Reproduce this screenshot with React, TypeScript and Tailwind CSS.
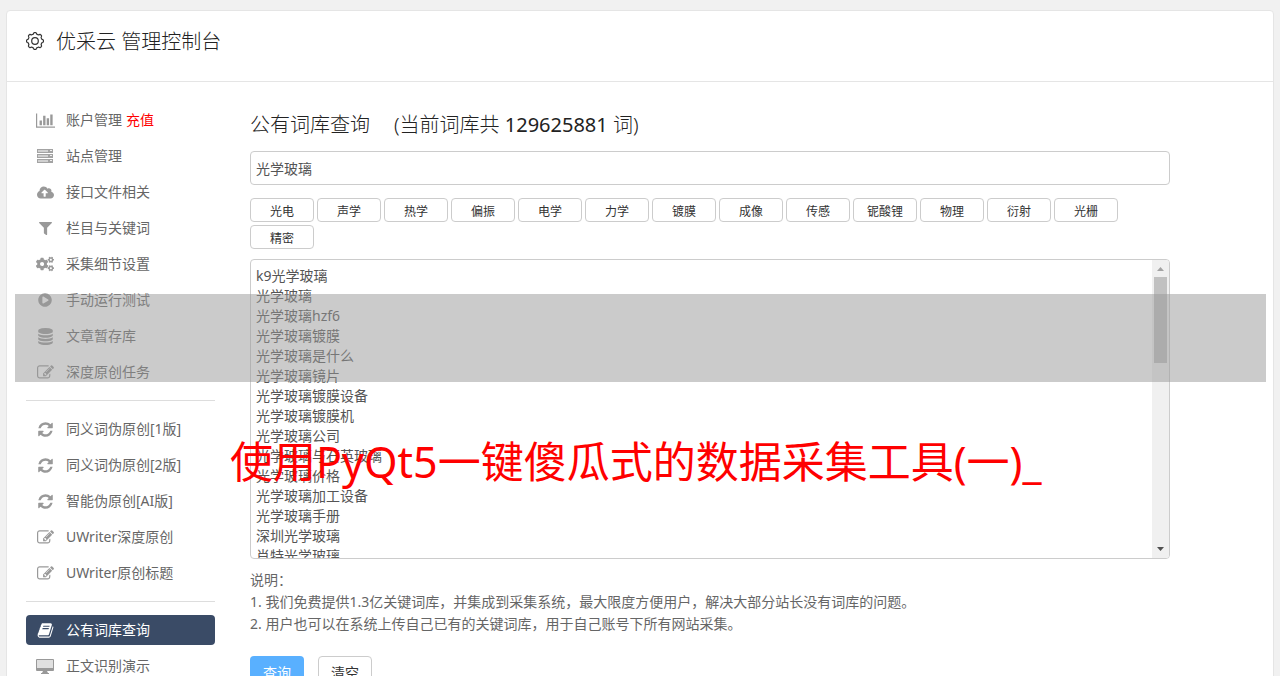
import { useState } from 'react'
import type { ReactNode } from 'react'
import clsx from 'clsx'
import { FaCloudUploadAlt, FaCogs, FaFilter, FaPlayCircle } from 'react-icons/fa'

type MenuItem = {
  label: string
  icon: ReactNode
  extra?: string
  active?: boolean
}

const Glyph = ({ d, viewBox = '0 0 1792 1792', size = 17 }: { d: string; viewBox?: string; size?: number }) => (
  <svg viewBox={viewBox} width={size} height={size} fill="currentColor" aria-hidden="true">
    <path d={d} />
  </svg>
)

const REFRESH =
  'M1639 1056q0 5-1 7-64 268-268 434.5t-478 166.5q-146 0-282.5-55t-243.5-157l-129 129q-19 19-45 19t-45-19-19-45v-448q0-26 19-45t45-19h448q26 0 45 19t19 45-19 45l-137 137q71 66 161 102t187 36q134 0 250-65t186-179q11-17 53-117 8-23 30-23h192q13 0 22.5 9.5t9.5 22.5zm25-800v448q0 26-19 45t-45 19h-448q-26 0-45-19t-19-45 19-45l138-138q-148-137-349-137-134 0-250 65t-186 179q-11 17-53 117-8 23-30 23h-199q-13 0-22.5-9.5t-9.5-22.5v-7q65-268 270-434.5t480-166.5q146 0 284 55.5t245 156.5l130-129q19-19 45-19t45 19 19 45z'
const EDIT =
  'M888 1184l116-116-152-152-116 116v56h96v96h56zm440-720q-16-16-33 1l-350 350q-17 17-1 33t33-1l350-350q17-17 1-33zm80 594v190q0 119-84.5 203.5t-203.5 84.5h-832q-119 0-203.5-84.5t-84.5-203.5v-832q0-119 84.5-203.5t203.5-84.5h832q63 0 117 25 15 7 18 23 3 17-9 29l-49 49q-14 14-32 8-23-6-45-6h-832q-66 0-113 47t-47 113v832q0 66 47 113t113 47h832q66 0 113-47t47-113v-126q0-13 9-22l64-64q15-15 35-7t20 29zm-96-738l288 288-672 672h-288v-288zm444 132l-92 92-288-288 92-92q28-28 68-28t68 28l152 152q28 28 28 68t-28 68z'
const DATABASE =
  'M896 768q237 0 443-43t325-127v170q0 69-103 128t-280 93.5-385 34.5-385-34.5-280-93.5-103-128v-170q119 84 325 127t443 43zm0 768q237 0 443-43t325-127v170q0 69-103 128t-280 93.5-385 34.5-385-34.5-280-93.5-103-128v-170q119 84 325 127t443 43zm0-384q237 0 443-43t325-127v170q0 69-103 128t-280 93.5-385 34.5-385-34.5-280-93.5-103-128v-170q119 84 325 127t443 43zm0-1152q208 0 385 34.5t280 93.5 103 128v128q0 69-103 128t-280 93.5-385 34.5-385-34.5-280-93.5-103-128v-128q0-69 103-128t280-93.5 385-34.5z'
const BOOK =
  'M1703 478q40 57 18 129l-275 906q-19 64-76.5 107.5t-122.5 43.5h-923q-77 0-148.5-53.5t-99.5-131.5q-24-67-2-127 0-4 3-27t4-37q1-8-3-21.5t-3-19.5q2-11 8-21t16.5-23.5 16.5-23.5q23-38 45-91.5t30-91.5q3-10 .5-30t-.5-28q3-11 17-28t17-23q21-36 42-92t25-90q1-9-2.5-32t.5-28q4-13 22-30.5t22-22.5q19-26 42.5-84.5t27.5-96.5q1-8-3-25.5t-2-26.5q2-8 9-18t18-23 17-21q8-12 16.5-30.5t15-35 16-36 19.5-32 26.5-23.5 36-11.5 47.5 5.5l-1 3q38-9 51-9h761q74 0 114 56t18 130l-274 906q-36 119-71.5 153.5t-128.5 34.5h-869q-27 0-38 15-11 16-1 43 24 70 144 70h923q29 0 56-15.5t35-41.5l300-987q7-22 5-57 38 15 59 43zm-1064 2q-4 13 2 22.5t20 9.5h608q13 0 25.5-9.5t16.5-22.5l21-64q4-13-2-22.5t-20-9.5h-608q-13 0-25.5 9.5t-16.5 22.5zm-83 256q-4 13 2 22.5t20 9.5h608q13 0 25.5-9.5t16.5-22.5l21-64q4-13-2-22.5t-20-9.5h-608q-13 0-25.5 9.5t-16.5 22.5z'
const CHART =
  'M640 896v512h-256v-512h256zM1024 384v1024h-256v-1024h256zM2048 1536v128h-2048v-1536h128v1408h1920zM1408 640v768h-256v-768h256zM1792 256v1152h-256v-1152h256z'

const ServerIcon = () => (
  <svg viewBox="0 0 16 14" width="16" height="14" aria-hidden="true">
    {[0, 5, 10].map((y) => (
      <g key={y}>
        <rect x="0" y={y} width="16" height="4" fill="#a3a3a3" />
        <rect x="1" y={y + 1} width="10" height="2" fill="#d0d0d0" />
        <rect x="13" y={y + 1} width="2" height="1" fill="#eee" />
      </g>
    ))}
  </svg>
)

const DesktopIcon = () => (
  <svg viewBox="0 0 18 15" width="18" height="15" aria-hidden="true">
    <rect x="0" y="0" width="18" height="12" rx="1" fill="#999" />
    <rect x="1" y="1" width="16" height="8" fill="#e0e0e0" />
    <path d="M7 12h4l1 2h1v1H5v-1h1z" fill="#999" />
  </svg>
)

// cog outline with eight rounded teeth
const GearIcon = () => {
  const points: string[] = []
  for (let i = 0; i <= 96; i++) {
    const a = (i / 96) * Math.PI * 2
    const r = 7.7 + 0.75 * Math.tanh(2.5 * Math.cos(8 * a))
    points.push(`${(9 + r * Math.cos(a)).toFixed(2)} ${(9 + r * Math.sin(a)).toFixed(2)}`)
  }
  return (
    <svg viewBox="0 0 18 18" width="18" height="18" fill="none" stroke="#333" strokeWidth="1.2" aria-hidden="true">
      <path d={`M${points.join('L')}Z`} strokeLinejoin="round" />
      <circle cx="9" cy="9" r="3.3" />
    </svg>
  )
}

const MENU: MenuItem[][] = [
  [
    { label: '账户管理', extra: '充值', icon: <Glyph d={CHART} viewBox="0 0 2048 1792" size={19} /> },
    { label: '站点管理', icon: <ServerIcon /> },
    { label: '接口文件相关', icon: <FaCloudUploadAlt size={17} /> },
    { label: '栏目与关键词', icon: <FaFilter size={13} /> },
    { label: '采集细节设置', icon: <FaCogs size={18} /> },
    { label: '手动运行测试', icon: <FaPlayCircle size={14} /> },
    { label: '文章暂存库', icon: <Glyph d={DATABASE} /> },
    { label: '深度原创任务', icon: <Glyph d={EDIT} /> },
  ],
  [
    { label: '同义词伪原创[1版]', icon: <Glyph d={REFRESH} /> },
    { label: '同义词伪原创[2版]', icon: <Glyph d={REFRESH} /> },
    { label: '智能伪原创[AI版]', icon: <Glyph d={REFRESH} /> },
    { label: 'UWriter深度原创', icon: <Glyph d={EDIT} /> },
    { label: 'UWriter原创标题', icon: <Glyph d={EDIT} /> },
  ],
  [
    { label: '公有词库查询', icon: <Glyph d={BOOK} />, active: true },
    { label: '正文识别演示', icon: <DesktopIcon /> },
  ],
]

const TAGS = ['光电', '声学', '热学', '偏振', '电学', '力学', '镀膜', '成像', '传感', '铌酸锂', '物理', '衍射', '光栅', '精密']

const WORDS = [
  'k9光学玻璃', '光学玻璃', '光学玻璃hzf6', '光学玻璃镀膜', '光学玻璃是什么', '光学玻璃镜片',
  '光学玻璃镀膜设备', '光学玻璃镀膜机', '光学玻璃公司', '光学玻璃与石英玻璃', '光学玻璃价格',
  '光学玻璃加工设备', '光学玻璃手册', '深圳光学玻璃', '肖特光学玻璃',
]

function Sidebar() {
  return (
    <nav className="w-[189px] shrink-0">
      {MENU.map((group, i) => (
        <div key={i}>
          {i > 0 && <hr className="my-[13px] border-[#ddd]" />}
          <ul className="space-y-1.5">
            {group.map((item) => (
              <li key={item.label}>
                <a
                  href="#"
                  className={clsx(
                    'flex h-[30px] items-center rounded text-sm',
                    item.active ? 'bg-[#3a4b66] text-white' : 'text-[#666]',
                  )}
                >
                  <span className={clsx('flex w-10 justify-center pr-0.5', item.active ? 'text-white' : 'text-[#999]')}>
                    {item.icon}
                  </span>
                  {item.label}
                  {item.extra && <span className="ml-1 text-[#f00]">{item.extra}</span>}
                </a>
              </li>
            ))}
          </ul>
        </div>
      ))}
    </nav>
  )
}

function WordQuery() {
  const [keyword, setKeyword] = useState('光学玻璃')
  const [words, setWords] = useState(WORDS.join('\n'))

  return (
    <main className="ml-[35px] max-w-[920px] min-w-0 flex-1">
      <h2 className="mt-1.5 flex text-xl leading-7 font-light text-[#222]">
        <span>公有词库查询</span>
        <span className="ml-6">
          (当前词库共 <span className="font-normal">129625881</span> 词)
        </span>
      </h2>
      <input
        aria-label="关键词"
        value={keyword}
        onChange={(e) => setKeyword(e.target.value)}
        className="mt-3 block h-[34px] w-full rounded border border-[#ccc] bg-white px-[5px] text-sm text-[#555]"
      />
      <div className="mt-[13px] flex flex-wrap gap-[3px]">
        {TAGS.map((tag) => (
          <button
            key={tag}
            type="button"
            onClick={() => setKeyword(tag)}
            className="h-6 w-16 rounded border border-[#ccc] bg-white pt-1 text-xs text-[#333]"
          >
            {tag}
          </button>
        ))}
      </div>
      <div className="mt-2.5 flex h-[300px] overflow-hidden rounded border border-[#ccc]">
        <textarea
          aria-label="词库结果"
          value={words}
          onChange={(e) => setWords(e.target.value)}
          className="h-full min-w-0 flex-1 resize-none overflow-hidden px-[5px] pt-1.5 text-sm leading-5 text-[#555]"
        />
        <div className="flex w-[17px] flex-col items-center bg-[#f0f0f0]">
          <svg viewBox="0 0 17 17" className="size-[17px] shrink-0" aria-hidden="true">
            <path d="M5 11L8.5 7L12 11Z" fill="#a3a3a3" />
          </svg>
          <div className="h-[86px] w-[13px] bg-[#c1c1c1]" />
          <svg viewBox="0 0 17 17" className="mt-auto size-[17px] shrink-0" aria-hidden="true">
            <path d="M5 6L8.5 10L12 6Z" fill="#505050" />
          </svg>
        </div>
      </div>
      <div className="mt-2.5 text-sm leading-[22px] text-[#666]">
        <p>说明：</p>
        <p>1. 我们免费提供1.3亿关键词库，并集成到采集系统，最大限度方便用户，解决大部分站长没有词库的问题。</p>
        <p>2. 用户也可以在系统上传自己已有的关键词库，用于自己账号下所有网站采集。</p>
      </div>
      <div className="mt-[21px] flex gap-3.5">
        <button type="button" className="h-[34px] w-[54px] rounded bg-[#59b0ff] text-sm text-white">
          查询
        </button>
        <button
          type="button"
          onClick={() => setWords('')}
          className="h-[34px] w-[54px] rounded border border-[#ccc] bg-white text-sm text-[#333]"
        >
          清空
        </button>
      </div>
    </main>
  )
}

export default function App() {
  return (
    <div className="relative h-screen overflow-hidden bg-[#f1f1f1] px-1.5 pt-2.5 font-['Noto_Sans','Noto_Sans_CJK_SC',sans-serif]">
      <div className="min-h-full rounded border border-[#e5e5e5] bg-white">
        <header className="flex h-[71px] items-start border-b border-[#e5e5e5] px-[19px] pt-[17px]">
          <div className="mt-1 text-[#333]">
            <GearIcon />
          </div>
          <h1 className="ml-3 text-xl leading-7 font-light text-[#222]">优采云 管理控制台</h1>
        </header>
        <div className="flex px-[19px] pt-[23px]">
          <Sidebar />
          <WordQuery />
        </div>
      </div>

      {/* Banner strip and caption over the page */}
      <div className="pointer-events-none absolute top-[294px] right-3.5 left-[15px] h-[88px] bg-[#979797]/50" />
      <p className="pointer-events-none absolute top-[430px] left-[230px] text-[43px] leading-[64px] whitespace-nowrap text-[#f00]">
        使用PyQt5一键傻瓜式的数据采集工具(一)_
      </p>
    </div>
  )
}
